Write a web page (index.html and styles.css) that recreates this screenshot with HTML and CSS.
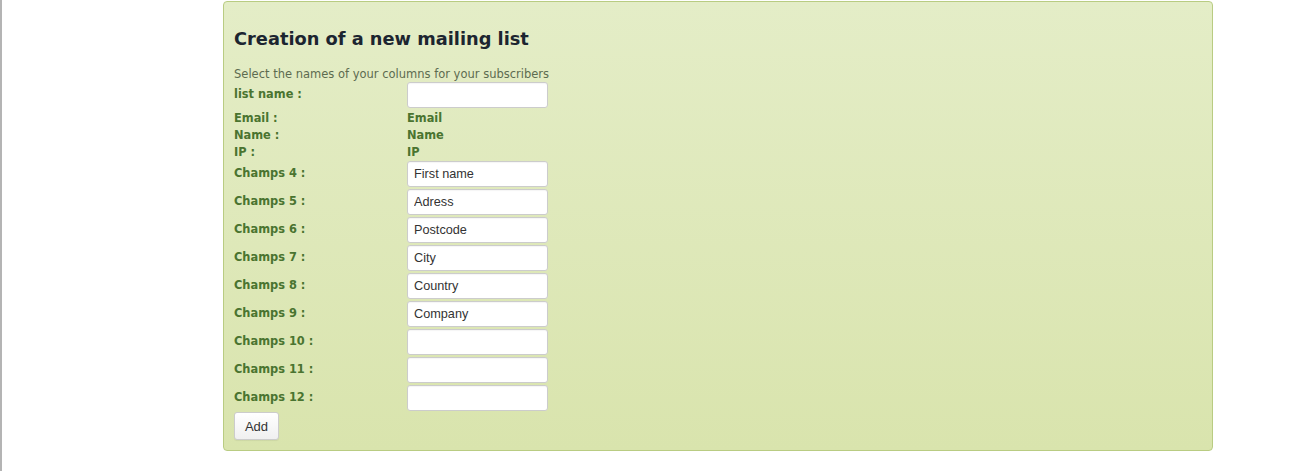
FILE: index.html
```html
<!DOCTYPE html>
<html>
<head>
<meta charset="utf-8">
<link rel="stylesheet" href="styles.css">
</head>
<body>
<div class="page">
  <div class="panel">
    <h2 class="title">Creation of a new mailing list</h2>
    <p class="subtitle">Select the names of your columns for your subscribers</p>
    <div class="row">
      <label class="lbl">list name :</label>
      <input class="field" type="text" value="">
    </div>
    <div class="row fixed"><span class="lbl">Email :</span><span class="val">Email</span></div>
    <div class="row fixed"><span class="lbl">Name :</span><span class="val">Name</span></div>
    <div class="row fixed"><span class="lbl">IP :</span><span class="val">IP</span></div>
    <div class="row"><label class="lbl">Champs 4 :</label><input class="field" type="text" value="First name"></div>
    <div class="row"><label class="lbl">Champs 5 :</label><input class="field" type="text" value="Adress"></div>
    <div class="row"><label class="lbl">Champs 6 :</label><input class="field" type="text" value="Postcode"></div>
    <div class="row"><label class="lbl">Champs 7 :</label><input class="field" type="text" value="City"></div>
    <div class="row"><label class="lbl">Champs 8 :</label><input class="field" type="text" value="Country"></div>
    <div class="row"><label class="lbl">Champs 9 :</label><input class="field" type="text" value="Company"></div>
    <div class="row"><label class="lbl">Champs 10 :</label><input class="field" type="text" value=""></div>
    <div class="row"><label class="lbl">Champs 11 :</label><input class="field" type="text" value=""></div>
    <div class="row"><label class="lbl">Champs 12 :</label><input class="field" type="text" value=""></div>
    <button class="btn" type="button">Add</button>
  </div>
</div>
</body>
</html>
```
FILE: styles.css
```css
html, body {
  margin: 0;
  padding: 0;
  background: #fff;
}
body {
  height: 471px;
  border-left: 2px solid #b4b4b4;
  box-sizing: border-box;
  font-family: "DejaVu Sans", Verdana, sans-serif;
}
.page {
  padding-top: 1px;
  padding-left: 221px;
}
.panel {
  width: 990px;
  height: 450px;
  box-sizing: border-box;
  border: 1px solid #b9cc82;
  border-radius: 4px;
  background: linear-gradient(to bottom, #e4edc7 0%, #d9e4ad 100%);
  padding: 27px 10px 8px 10px;
}
.title {
  margin: -2px 0 0 0;
  font-size: 17.8px;
  line-height: 23px;
  font-weight: bold;
  color: #1c2530;
}
.subtitle {
  margin: 17px 0 0 0;
  font-size: 11.5px;
  line-height: 14px;
  color: #5d6b50;
}
.row {
  display: flex;
  align-items: center;
  height: 28px;
}
.row.fixed {
  height: 17px;
}
.lbl {
  width: 173px;
  flex: none;
  font-size: 11.4px;
  font-weight: bold;
  color: #4a7430;
  line-height: 14px;
  margin-top: -2px;
}
.val {
  font-size: 11.4px;
  font-weight: bold;
  color: #4a7430;
  line-height: 14px;
}
.row.fixed .lbl, .row.fixed .val {
  margin-top: 0;
}
.field {
  width: 141px;
  height: 26px;
  box-sizing: border-box;
  margin: 0;
  border: 1px solid #cccccc;
  border-radius: 3px;
  background: #fff;
  padding: 0 6px;
  font-family: "Liberation Sans", Arial, sans-serif;
  font-size: 12.7px;
  color: #333;
  box-shadow: inset 0 1px 1px rgba(0,0,0,0.04);
  outline: none;
}
.btn {
  display: block;
  width: 45px;
  height: 28px;
  margin: 0;
  border: 1px solid #cccccc;
  border-radius: 3px;
  background: linear-gradient(to bottom, #ffffff, #f0f0f0);
  font-family: "Liberation Sans", Arial, sans-serif;
  font-size: 13px;
  color: #333;
  padding: 0;
  box-shadow: 0 1px 1px rgba(0,0,0,0.06);
}
```
